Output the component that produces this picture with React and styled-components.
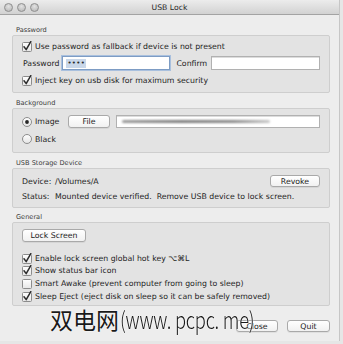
import React from 'react'
import styled, { createGlobalStyle } from 'styled-components'

const GlobalStyle = createGlobalStyle`
  html, body {
    margin: 0;
    padding: 0;
    background: #e6e6e6;
  }
  body {
    font-family: 'DejaVu Sans', 'Liberation Sans', sans-serif;
    font-size: 7.8px;
    color: #1e1e1e;
  }
`

const Window = styled.div`
  position: relative;
  width: 339px;
  height: 341px;
  background: #ededed;
  border-right: 1px solid #c6c6c6;
  display: flex;
  flex-direction: column;
  overflow: hidden;
`

const TitleBar = styled.div`
  flex: none;
  height: 14px;
  display: grid;
  grid-template-columns: 1fr auto 1fr;
  align-items: center;
  background: linear-gradient(#ececec, #d2d2d2);
  border-bottom: 1px solid #a3a3a3;
`

const Lights = styled.div`
  display: flex;
  gap: 4px;
  padding-left: 4px;
`

const Light = styled.span`
  width: 7px;
  height: 7px;
  border-radius: 50%;
  background: radial-gradient(circle at 50% 35%, #e2e2e2, #b4b4b4);
  border: 0.5px solid #8f8f8f;
`

const Title = styled.div`
  font-size: 7.7px;
  color: #2a2a2a;
`

const Content = styled.div`
  display: flex;
  flex-direction: column;
  padding: 11px 9px 0 12px;
`

const Section = styled.div`
  display: flex;
  flex-direction: column;
  margin-top: ${(props) => props.$mt || 0}px;
`

const SectionLabel = styled.div`
  height: 9px;
  line-height: 9px;
  padding-left: 4px;
  font-size: 6.6px;
  color: #3c3c3c;
`

const Box = styled.div`
  display: flex;
  flex-direction: column;
  gap: ${(props) => props.$gap || 0}px;
  padding: ${(props) => props.$pad};
  background: #e3e3e3;
  border: 1px solid #cecece;
  border-radius: 2px;
`

const Row = styled.div`
  display: flex;
  align-items: center;
  height: ${(props) => props.$h || 12}px;
  margin-top: ${(props) => props.$mt || 0}px;
  white-space: nowrap;
`

const CheckLabel = styled.span`
  margin-left: 3px;
`

const FieldLabel = styled.span`
  width: ${(props) => props.$w || 'auto'};
  padding-left: ${(props) => props.$pl || 0}px;
  margin-right: ${(props) => props.$mr || 0}px;
`

const Field = styled.div`
  display: flex;
  align-items: center;
  box-sizing: border-box;
  height: ${(props) => props.$h || 14}px;
  width: ${(props) => (props.$w ? props.$w + 'px' : 'auto')};
  flex: ${(props) => (props.$w ? 'none' : '1')};
  margin-left: ${(props) => props.$ml || 0}px;
  padding-left: ${(props) => props.$pl || 3}px;
  background: #fff;
  border: 1px solid ${(props) => (props.$focus ? '#7d9cc4' : '#b1b1b1')};
  box-shadow: ${(props) => (props.$focus ? '0 0 0 1px #a9c0de' : 'inset 0 1px 0 #dcdcdc')};
`

const Selection = styled.span`
  background: #c9d7e9;
  padding: 0 1px;
  font-size: 7px;
  letter-spacing: 0.3px;
  line-height: 9px;
  color: #2a2a2a;
`

const BlurredPath = styled.div`
  width: 148px;
  height: 3px;
  border-radius: 2px;
  background: linear-gradient(90deg, #9a9a9a, #7d7d7d 40%, #8a8a8a 75%, #c8c8c8);
  filter: blur(1px);
`

const Button = styled.div`
  box-sizing: border-box;
  display: flex;
  align-items: center;
  justify-content: center;
  width: ${(props) => props.$w}px;
  height: ${(props) => props.$h || 12}px;
  margin-left: ${(props) => props.$ml || '0px'};
  background: linear-gradient(#ffffff, #f1f1f1);
  border: 1px solid #a9a9a9;
  border-radius: 3px;
  box-shadow: 0 1px 0 rgba(0, 0, 0, 0.06);
  font-size: 7.8px;
  color: #1c1c1c;
`

const Footer = styled.div`
  display: flex;
  justify-content: flex-end;
  gap: 9px;
  margin-top: 14px;
`

const Watermark = styled.div`
  position: absolute;
  left: 50px;
  top: 307px;
  display: flex;
  align-items: baseline;
  font-family: 'Noto Sans CJK SC', sans-serif;
  font-size: 23px;
  line-height: 24px;
  color: #1a1a1a;
  white-space: nowrap;
  text-shadow: 0 0 2px #fff, 0 0 1px #fff;
`

const WatermarkLatin = styled.span`
  display: inline-block;
  margin-left: 1px;
  transform: scaleX(0.8);
  transform-origin: left center;
  font-weight: 300;
  letter-spacing: -0.3px;
`

function CheckBox({ checked }) {
  return (
    <svg width="10" height="11" viewBox="0 0 10 11" style={{ flex: 'none' }}>
      <defs>
        <linearGradient id="cbg" x1="0" y1="0" x2="0" y2="1">
          <stop offset="0" stopColor="#ffffff" />
          <stop offset="1" stopColor="#e6e6e6" />
        </linearGradient>
      </defs>
      <rect x="0.5" y="1.5" width="9" height="9" rx="1" fill="url(#cbg)" stroke="#8c8c8c" />
      {checked && <path d="M2 5.8 L4.2 8.6 L8.8 0.6" fill="none" stroke="#2b2b2b" strokeWidth="1.5" strokeLinecap="round" strokeLinejoin="round" />}
    </svg>
  )
}

function Radio({ checked }) {
  return (
    <svg width="10" height="10" viewBox="0 0 10 10" style={{ flex: 'none' }}>
      <defs>
        <linearGradient id="rbg" x1="0" y1="0" x2="0" y2="1">
          <stop offset="0" stopColor="#ffffff" />
          <stop offset="1" stopColor="#e4e4e4" />
        </linearGradient>
      </defs>
      <circle cx="5" cy="5" r="4.5" fill="url(#rbg)" stroke="#8c8c8c" />
      {checked && <circle cx="5" cy="5" r="1.9" fill="#262626" />}
    </svg>
  )
}

function CheckRow({ checked, children, h }) {
  return (
    <Row $h={h}>
      <CheckBox checked={checked} />
      <CheckLabel>{children}</CheckLabel>
    </Row>
  )
}

export default function App() {
  return (
    <>
      <GlobalStyle />
      <Window>
        <TitleBar>
          <Lights>
            <Light />
            <Light />
            <Light />
          </Lights>
          <Title>USB Lock</Title>
          <div />
        </TitleBar>
        <Content>
          <Section>
            <SectionLabel>Password</SectionLabel>
            <Box $pad="4px 9px 6px 9px" $gap={4}>
              <CheckRow checked>Use password as fallback if device is not present</CheckRow>
              <Row $h={14}>
                <FieldLabel $pl={1}>Password</FieldLabel>
                <Field $w={108} $ml={3} $focus>
                  <Selection>••••</Selection>
                </Field>
                <FieldLabel $pl={6}>Confirm</FieldLabel>
                <Field $ml={4} />
              </Row>
              <CheckRow checked>Inject key on usb disk for maximum security</CheckRow>
            </Box>
          </Section>
          <Section $mt={6}>
            <SectionLabel>Background</SectionLabel>
            <Box $pad="6px 9px 7px 9px" $gap={5}>
              <Row $h={13}>
                <Radio checked />
                <FieldLabel $pl={3} $w="33px">Image</FieldLabel>
                <Button $w={42} $h={13}>File</Button>
                <Field $h={13} $ml={6} $pl={5}>
                  <BlurredPath />
                </Field>
              </Row>
              <Row>
                <Radio />
                <FieldLabel $pl={3}>Black</FieldLabel>
              </Row>
            </Box>
          </Section>
          <Section $mt={6}>
            <SectionLabel>USB Storage Device</SectionLabel>
            <Box $pad="6px 9px 5px 9px" $gap={3}>
              <Row>
                <FieldLabel $w="33px">Device:</FieldLabel>
                <span>/Volumes/A</span>
                <Button $w={50} $ml="auto">Revoke</Button>
              </Row>
              <Row>
                <FieldLabel $w="33px">Status:</FieldLabel>
                <span>Mounted device verified.&nbsp; Remove USB device to lock screen.</span>
              </Row>
            </Box>
          </Section>
          <Section $mt={5}>
            <SectionLabel>General</SectionLabel>
            <Box $pad="6px 9px 3px 9px">
              <Row $h={13}>
                <Button $w={64} $h={13}>Lock Screen</Button>
              </Row>
              <Row $h={12.6} $mt={10}>
                <CheckBox checked />
                <CheckLabel>Enable lock screen global hot key ⌥⌘L</CheckLabel>
              </Row>
              <CheckRow checked h={12.6}>Show status bar icon</CheckRow>
              <CheckRow h={12.6}>Smart Awake (prevent computer from going to sleep)</CheckRow>
              <CheckRow checked h={12.6}>Sleep Eject (eject disk on sleep so it can be safely removed)</CheckRow>
            </Box>
          </Section>
          <Footer>
            <Button $w={42}>Close</Button>
            <Button $w={43}>Quit</Button>
          </Footer>
        </Content>
        <Watermark>
          双电网<WatermarkLatin>(www. pcpc. me)</WatermarkLatin>
        </Watermark>
      </Window>
    </>
  )
}
